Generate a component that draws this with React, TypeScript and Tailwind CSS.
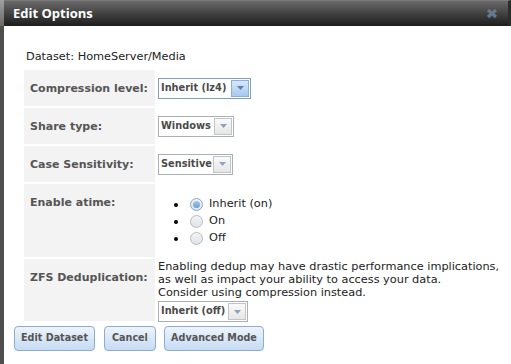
import React from "react";

const body = { fontFamily: '"DejaVu Sans", Verdana, sans-serif' };

function Select({ label, width, active }: { label: string; width: number; active?: boolean }) {
  return (
    <div
      className={`flex h-[21px] items-stretch border bg-white ${active ? "border-[#7f9fc4]" : "border-[#a9b0b8]"}`}
      style={{ width }}
    >
      <div className="flex flex-1 items-center overflow-hidden whitespace-nowrap pl-[2px] text-[9.8px] font-bold text-[#4a4a4a]" style={body}>
        {label}
      </div>
      <div
        className={`m-[1px] flex w-[18px] shrink-0 items-center justify-center border ${
          active
            ? "border-[#8fb0d6] bg-gradient-to-b from-[#d8e8fa] to-[#a8c9ef]"
            : "border-[#c4c4c4] bg-gradient-to-b from-[#fafafa] to-[#e6e6e6]"
        }`}
      >
        <svg width="7" height="4" viewBox="0 0 7 4">
          <path d="M0 0 L7 0 L3.5 4 Z" fill={active ? "#5b81ad" : "#8da3bd"} />
        </svg>
      </div>
    </div>
  );
}

function Radio({ checked, label }: { checked?: boolean; label: string }) {
  return (
    <div className="flex h-[17px] items-center">
      <span className="ml-[16px] h-[4px] w-[4px] rounded-full bg-black" />
      <span
        className={`ml-[12px] flex h-[13px] w-[13px] items-center justify-center rounded-full border ${
          checked ? "border-[#8aa6c4]" : "border-[#b4bcc6]"
        } bg-gradient-to-b from-[#f2f4f6] to-[#dfe3e8]`}
      >
        {checked && <span className="h-[7px] w-[7px] rounded-full bg-gradient-to-b from-[#a8c8ea] to-[#6d9ccf]" />}
      </span>
      <span className="ml-[6px] text-[11.3px] text-[#222]" style={body}>
        {label}
      </span>
    </div>
  );
}

function Label({ children }: { children: React.ReactNode }) {
  return (
    <div className="w-[131px] shrink-0 bg-[#f3f3f3] pl-[6px] pt-[12px] text-[11px] font-bold leading-[13px] text-[#555]" style={body}>
      {children}
    </div>
  );
}

function Button({ children, width }: { children: React.ReactNode; width: number }) {
  return (
    <div
      className="flex h-[25px] items-center justify-center whitespace-nowrap rounded-[4px] border border-[#8cadd3] bg-gradient-to-b from-[#eef4fb] to-[#c6dbf3] text-[9.6px] font-bold text-[#555]"
      style={{ ...body, width }}
    >
      {children}
    </div>
  );
}

export default function App() {
  return (
    <div className="flex h-[364px] w-[511px] overflow-hidden bg-white">
      <div className="flex w-[4px] shrink-0 flex-col">
        <div className="h-[26px] bg-gradient-to-b from-[#a0a0a0] to-[#6a6a6a]" />
        <div className="flex-1 bg-[#4e4e4e]" />
      </div>
      <div className="flex flex-1 flex-col">
        <div className="flex h-[26px] items-center justify-between border-r-[3px] border-t border-[#2c2c2c] border-t-[#7a7a7a] bg-gradient-to-b from-[#6a6a6a] to-[#1e1e1e] pl-[9px] pr-[10px]">
          <span className="text-[13px] font-bold text-white" style={{ fontFamily: '"Open Sans", sans-serif' }}>
            Edit Options
          </span>
          <svg width="12" height="11" viewBox="0 0 12 11">
            <path d="M2 2 L10 9 M10 2 L2 9" stroke="#66788e" strokeWidth="3.2" strokeLinecap="butt" />
          </svg>
        </div>
        <div className="flex flex-col pl-[20px] pt-[24px]">
          <div className="h-[14px] pl-[2px] text-[11.3px] leading-[14px] text-[#222]" style={body}>
            Dataset: HomeServer/Media
          </div>
          <div className="mt-[6px] flex flex-col gap-[2px]">
            <div className="flex h-[36px] gap-[3px]">
              <Label>Compression level:</Label>
              <div className="flex items-center">
                <Select label="Inherit (lz4)" width={93} active />
              </div>
            </div>
            <div className="flex h-[36px] gap-[3px]">
              <Label>Share type:</Label>
              <div className="flex items-center">
                <Select label="Windows" width={76} />
              </div>
            </div>
            <div className="flex h-[36px] gap-[3px]">
              <Label>Case Sensitivity:</Label>
              <div className="flex items-center">
                <Select label="Sensitive" width={75} />
              </div>
            </div>
            <div className="flex h-[73px] gap-[3px]">
              <Label>Enable atime:</Label>
              <div className="flex flex-col justify-center pt-[2px]">
                <Radio checked label="Inherit (on)" />
                <Radio label="On" />
                <Radio label="Off" />
              </div>
            </div>
            <div className="flex h-[62px] gap-[3px]">
              <Label>ZFS Deduplication:</Label>
              <div className="flex flex-col pt-[1px]">
                <div className="text-[11.3px] leading-[13px] text-[#222]" style={body}>
                  Enabling dedup may have drastic performance implications,
                  <br />
                  as well as impact your ability to access your data.
                  <br />
                  Consider using compression instead.
                </div>
                <div className="mt-[2px]">
                  <Select label="Inherit (off)" width={90} />
                </div>
              </div>
            </div>
          </div>
          <div className="ml-[-10px] mt-[5px] flex gap-[8px]">
            <Button width={81}>Edit Dataset</Button>
            <div className="ml-[1px]">
              <Button width={52}>Cancel</Button>
            </div>
            <Button width={100}>Advanced Mode</Button>
          </div>
        </div>
      </div>
    </div>
  );
}
